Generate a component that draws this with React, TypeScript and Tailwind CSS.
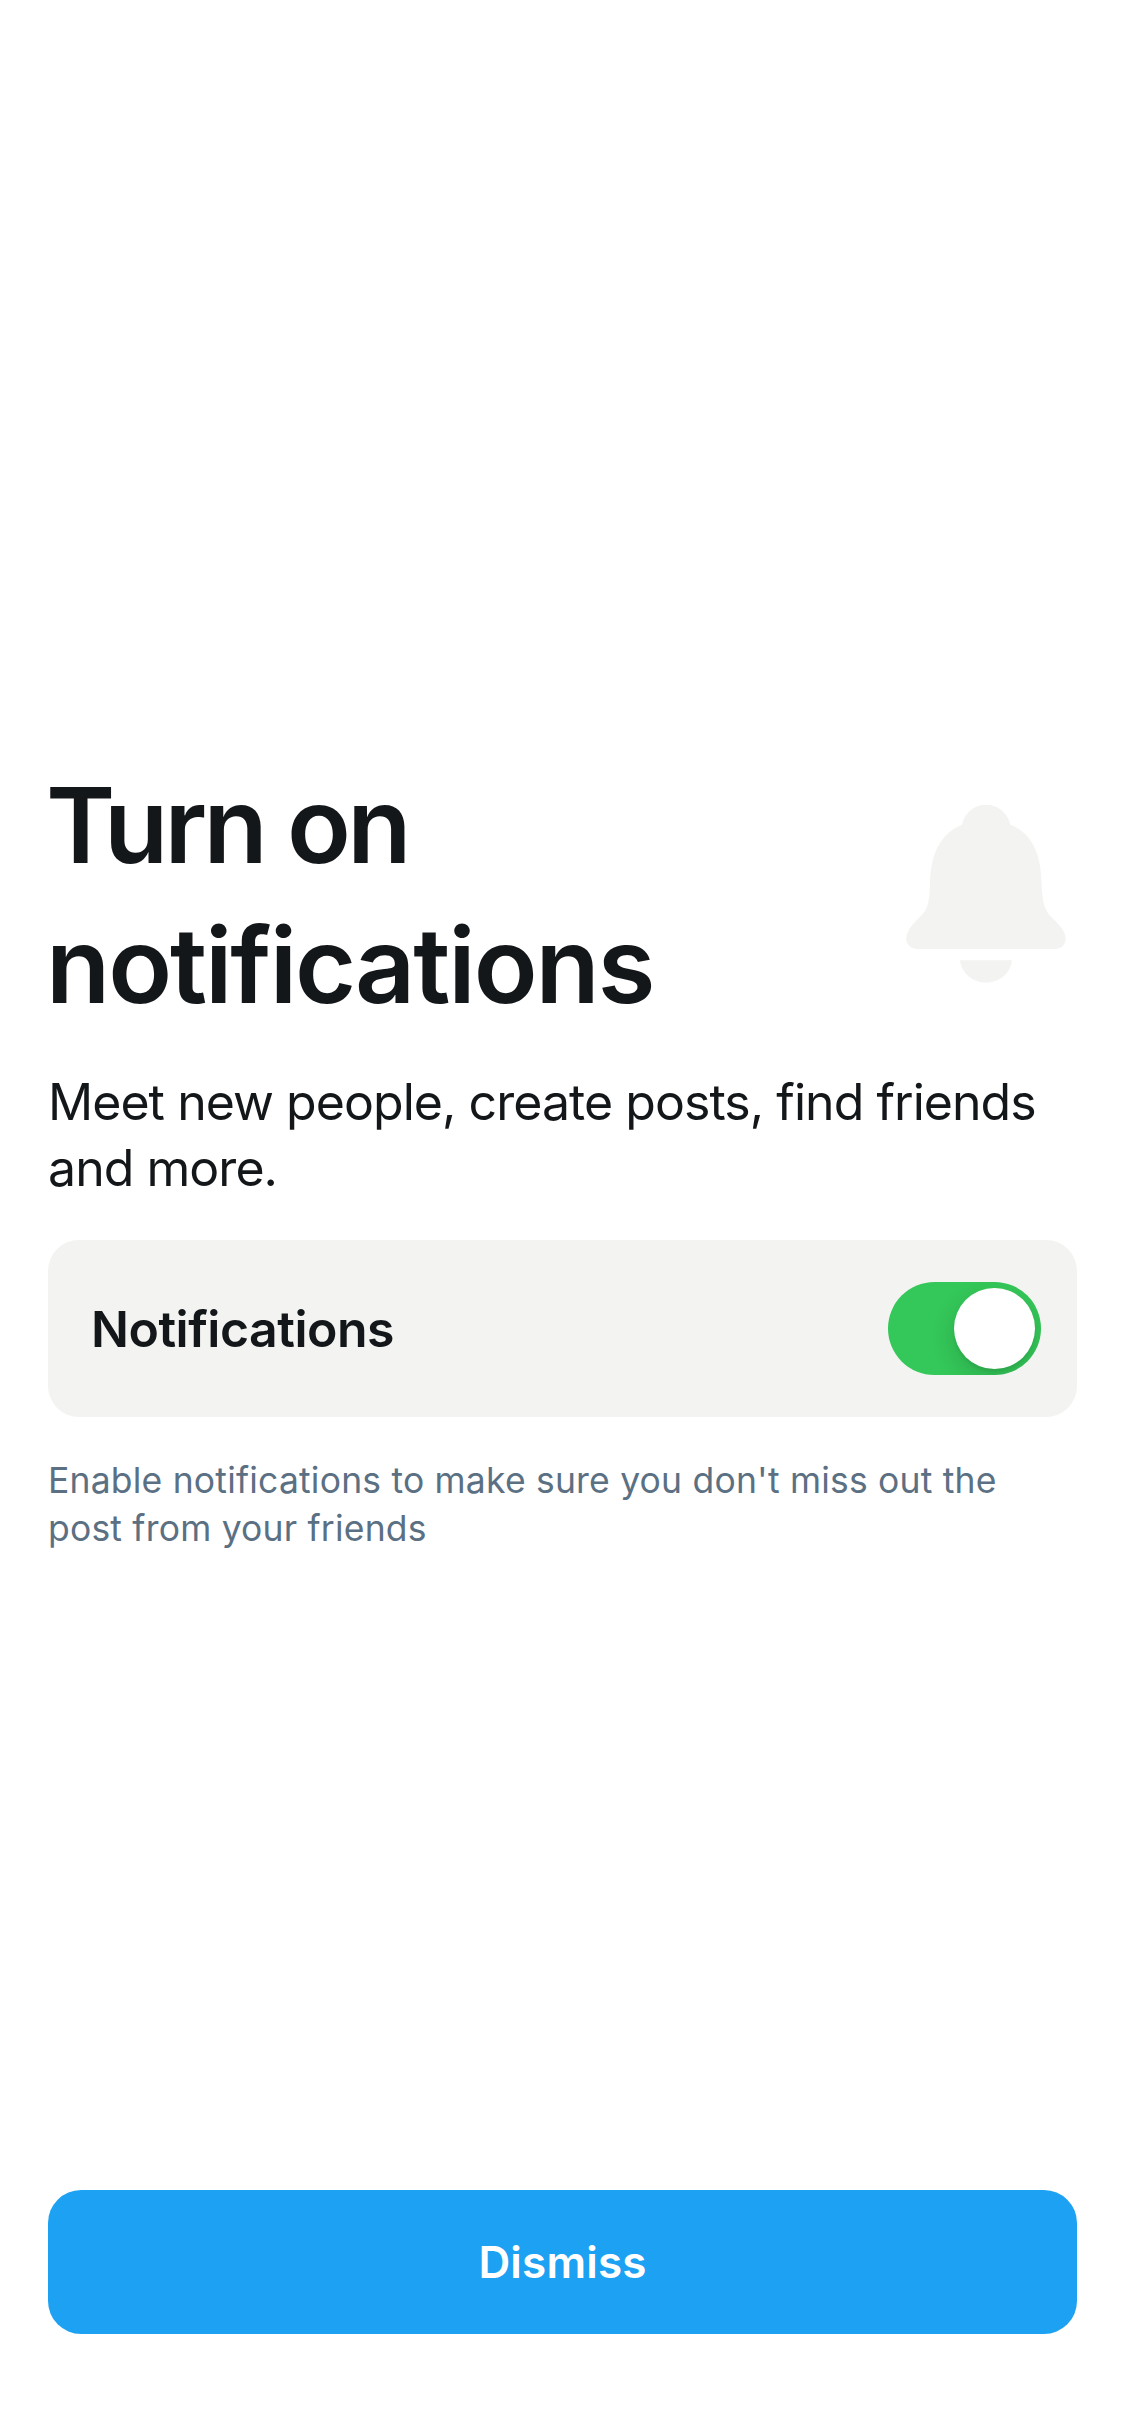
import { useState } from "react";

function BellIcon() {
  return (
    <svg
      className="mt-[45px] mr-[11px] h-[178px] w-[160px] shrink-0 fill-[#f3f3f2]"
      viewBox="77 75 480 534"
      aria-hidden="true"
    >
      <path d="M245 134C253 98 283 74 317 74C352 74 382 98 390 134C450 158 484 216 484 318C486 356 491 384 504 401C526 426 556 447 556 476C556 495 542 507 520 507H114C92 507 78 495 78 476C78 447 108 422 130 399C144 380 148 354 149 318C149 216 185 158 245 134Z" />
      <path d="M239 541H395C391 579 358 608 317 608C276 608 243 579 239 541Z" />
    </svg>
  );
}

function Toggle({ on, onChange }: { on: boolean; onChange: (on: boolean) => void }) {
  return (
    <button
      type="button"
      role="switch"
      aria-checked={on}
      aria-label="Notifications"
      onClick={() => onChange(!on)}
      className={`flex h-[93px] w-[153px] overflow-hidden rounded-full p-[6px] ${
        on ? "justify-end bg-[#34c759]" : "justify-start bg-[#d9d9d9]"
      }`}
    >
      <span className="size-[81px] rounded-full bg-white shadow-[0_9px_24px_rgba(0,0,0,0.15),0_3px_3px_rgba(0,0,0,0.06)]" />
    </button>
  );
}

export default function App() {
  const [enabled, setEnabled] = useState(true);

  return (
    <main className="flex h-[2436px] w-[1125px] flex-col bg-white px-12 pt-[760px] pb-[102px] font-['Inter',sans-serif] text-[#14171a]">
      <header className="flex items-start justify-between">
        <h1 className="-mt-[5px] -ml-[2px] mb-[5px] w-[700px] text-[105px] leading-[140px] font-semibold">
          <span className="block tracking-[-0.035em]">Turn on</span>
          <span className="block tracking-[-0.02em]">notifications</span>
        </h1>
        <BellIcon />
      </header>

      <p className="mt-[29px] text-[50px] leading-[66px] tracking-[-0.019em]">
        Meet new people, create posts, find friends and more.
      </p>

      <section className="mt-[39px] flex h-[177px] items-center justify-between rounded-[31px] bg-[#f3f3f2] pr-9 pl-[43px]">
        <span className="pt-[2px] text-[50px] font-semibold tracking-[-0.01em]">Notifications</span>
        <Toggle on={enabled} onChange={setEnabled} />
      </section>

      <p className="mt-[40px] text-[35.5px] leading-[48px] tracking-[0.2px] text-[#5b7083]">
        Enable notifications to make sure you don't miss out the
        <br />
        post from your friends
      </p>

      <button
        type="button"
        className="mt-auto h-36 w-full rounded-[33px] bg-[#1da1f2] text-[44px] font-[560] tracking-[0.004em] text-white"
      >
        Dismiss
      </button>
    </main>
  );
}
